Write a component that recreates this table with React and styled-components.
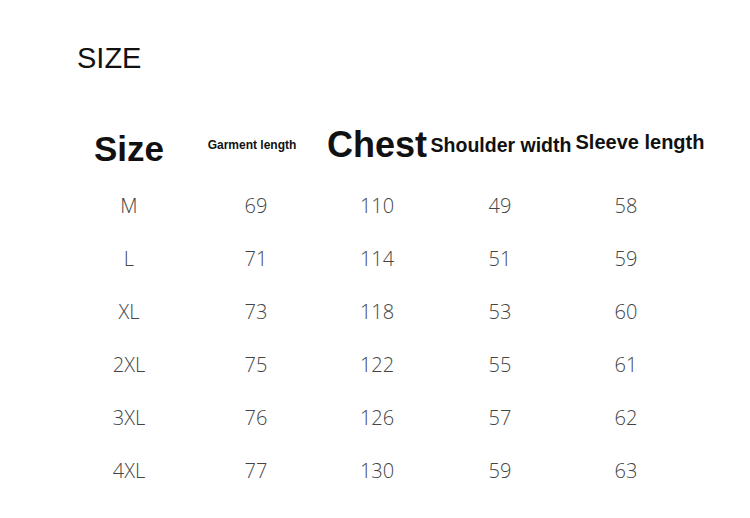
import styled, { createGlobalStyle } from 'styled-components'

const GlobalStyle = createGlobalStyle`
  html, body {
    margin: 0;
    padding: 0;
    background: #ffffff;
  }
`;

const headers = [
  { label: 'Size', size: 35, dx: 0, dy: 4 },
  { label: 'Garment length', size: 12, dx: -4, dy: 0 },
  { label: 'Chest', size: 36, dx: 0, dy: 0 },
  { label: 'Shoulder width', size: 19.5, dx: 1, dy: 1 },
  { label: 'Sleeve length', size: 20, dx: 14, dy: -2 },
];

const rows = [
  ['M', 69, 110, 49, 58],
  ['L', 71, 114, 51, 59],
  ['XL', 73, 118, 53, 60],
  ['2XL', 75, 122, 55, 61],
  ['3XL', 76, 126, 57, 62],
  ['4XL', 77, 130, 59, 63],
];

const App = () => {
    return (
        <Page>
            <GlobalStyle />
            <Title>SIZE</Title>
            <Table>
                {headers.map((h) => (
                    <HeadCell key={h.label} $size={h.size} $dx={h.dx} $dy={h.dy}>
                        {h.label}
                    </HeadCell>
                ))}
                {rows.map((row) =>
                    row.map((value, i) => (
                        <Cell key={row[0] + '-' + i}>{value}</Cell>
                    ))
                )}
            </Table>
        </Page>
    );
};

const Page = styled.div`
  width: 750px;
  height: 518px;
  box-sizing: border-box;
  padding: 42px 0 0 0;
  background: #ffffff;
`;

const Title = styled.h1`
  margin: 0 0 35px 77px;
  font-family: "Liberation Sans", Arial, sans-serif;
  font-size: 29px;
  font-weight: 400;
  color: #111111;
`;

const Table = styled.div`
  display: grid;
  grid-template-columns: 126px 128px 114px 132px 120px;
  grid-template-rows: 69px repeat(6, 53px);
  padding-left: 66px;
  align-items: center;
`;

const HeadCell = styled.div`
  justify-self: center;
  white-space: nowrap;
  font-family: "Liberation Sans", Arial, sans-serif;
  font-weight: 700;
  font-size: ${(p) => p.$size}px;
  color: #111111;
  transform: translate(${(p) => p.$dx}px, ${(p) => p.$dy}px);
`;

const Cell = styled.div`
  justify-self: center;
  font-family: "Open Sans", "Noto Sans", sans-serif;
  font-weight: 300;
  font-size: 20px;
  color: #444444;
`;

export default App
